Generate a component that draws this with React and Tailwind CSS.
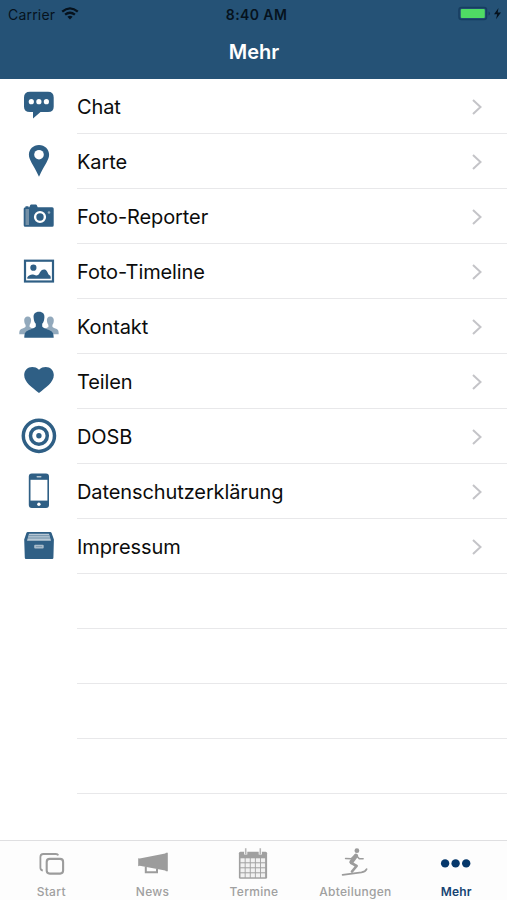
import React from 'react';

function ChatIcon() {
  return (
    <g>
      <path d="M15 12.700h18q5.700 0 5.700 5.700v9.300q0 5.300-5.700 5.300h-7.500L18 39.500V33h-3q-6 0-6-5.300v-9.300q0-5.700 6-5.700z" />
      <g fill="#fff">
        <circle cx="16.300" cy="22.700" r="2.600" />
        <circle cx="23.900" cy="22.700" r="2.600" />
        <circle cx="31.400" cy="22.700" r="2.600" />
      </g>
    </g>
  );
}

function PinIcon() {
  return (
    <g>
      <path d="M24 11c5.800 0 10.100 4.300 10.100 9.800 0 5.200-4.100 9.200-10.100 21.900-6-12.700-10.100-16.700-10.100-21.900C13.900 15.300 18.200 11 24 11z" />
      <circle cx="24" cy="20.700" r="4.800" fill="#fff" />
    </g>
  );
}

function CameraIcon() {
  return (
    <g>
      <path d="M10.500 18.300v-1h3v1h.8l1-2.300q.2-.4.700-.4h5q.5 0 .7.400l1 2.300h14.500q1.500 0 1.500 1.500v16.400q0 1.500-1.500 1.500h-27q-1.500 0-1.500-1.500V19.800q0-1.500 1.800-1.500z" />
      <rect x="10.500" y="20" width="3.500" height="16" fill="#7390a7" />
      <circle cx="25" cy="28" r="4.900" fill="none" stroke="#fff" strokeWidth="2.400" />
      <circle cx="34" cy="23.500" r="1.300" fill="#93abbd" />
    </g>
  );
}

function PictureIcon() {
  return (
    <g>
      <rect x="10" y="16.700" width="28" height="20.800" fill="#fff" stroke="#2f5f85" strokeWidth="2.200" />
      <circle cx="18.400" cy="23.700" r="3.100" />
      <path d="M12.300 34.700v-1.500c2-2.500 4.500-3.200 6.700-2.400 1.800.7 2.700 1.200 4.300 0 1.200-.8 1.500-2.800 3-4.200 1.800-1.500 4-1.500 5.400.3 1.300 1.700 1.300 3.500 2.800 4.300.8.400 1.200 1.200 1.200 2v1.500z" />
    </g>
  );
}

function PeopleIcon() {
  return (
    <g>
      <g fill="#92a9bc">
        <path d="M12.800 17.600c2.300 0 3.500 1.700 3.300 4-.2 2.200-.8 3.500-1.500 4.300v2l5 2.500v4.800H4.300c0-3.800.7-4.500 2.600-5.400 2-.8 3.200-1.200 3.700-2v-1.900c-.8-.8-1.300-2.100-1.400-4.300-.2-2.300 1.200-4 3.600-4z" />
        <path d="M35.200 17.600c-2.300 0-3.500 1.700-3.300 4 .2 2.200.8 3.500 1.500 4.300v2l-5 2.500v4.800h15.300c0-3.800-.7-4.500-2.600-5.400-2-.8-3.200-1.200-3.700-2v-1.900c.8-.8 1.300-2.100 1.400-4.300.2-2.300-1.200-4-3.600-4z" />
      </g>
      <path d="M24 12.800c3.900 0 5.700 2.300 5.400 5.600-.2 3-.9 5-2.200 6.300v2.900c.8 1.300 2.300 1.800 5.200 2.800 4.700 1.600 6.300 2.600 6.300 8.400H9.300c0-5.800 1.600-6.800 6.300-8.400 2.900-1 4.400-1.500 5.200-2.800v-2.900c-1.300-1.300-2-3.300-2.200-6.300-.3-3.300 1.500-5.600 5.400-5.600z" />
    </g>
  );
}

function HeartIcon() {
  return (
    <path d="M24 15.800C26 13.700 28.300 13 30.700 13c4.700 0 8.100 3.400 8.100 8.100 0 7.300-7.900 12.400-14.800 18-6.900-5.600-14.800-10.700-14.800-18 0-4.700 3.400-8.100 8.100-8.100 2.400 0 4.700.7 6.700 2.800z" />
  );
}

function TargetIcon() {
  return (
    <g>
      <circle cx="23.900" cy="26.800" r="15.600" fill="none" stroke="#2f5f85" strokeWidth="3.500" />
      <circle cx="23.900" cy="26.800" r="8.400" fill="none" stroke="#2f5f85" strokeWidth="3.500" />
      <circle cx="23.900" cy="26.800" r="2.700" />
    </g>
  );
}

function PhoneIcon() {
  return (
    <g>
      <rect x="13.800" y="9.400" width="20.200" height="34.600" rx="3" />
      <rect x="15.500" y="15.800" width="16.900" height="20.800" fill="#fff" />
      <rect x="21.500" y="12" width="5" height="1.400" rx=".7" fill="#b5c5d1" />
      <circle cx="23.900" cy="40.200" r="1.700" fill="#fff" />
    </g>
  );
}

function DrawerIcon() {
  return (
    <g>
      <path d="M12.800 13h22.400q1 0 1.400 1l2.300 6.500-.5 18.300q0 1.200-1.200 1.200H11q-1.200 0-1.200-1.200L9.200 20.500l2.200-6.500q.4-1 1.400-1z" />
      <path d="M14 14.700h20l2 7H12z" fill="#b8c8d5" />
      <path d="M13.500 16.700h21M13 19h22" stroke="#5b809c" strokeWidth=".8" />
      <rect x="19.200" y="25.700" width="9.500" height="3.800" rx="1" fill="#a9bccb" />
      <rect x="20.800" y="27.100" width="6.300" height="1" fill="#7c98ad" />
    </g>
  );
}

function StartIcon() {
  return (
    <g fill="none" stroke="#9c9c9c" strokeWidth="1.800">
      <path d="M31.300 14.300q-.6-1.300-2.400-1.300H16.400q-3 0-3 3v10.800q0 2.300 2.400 2.700" />
      <rect x="19.700" y="17.900" width="16.400" height="14.700" rx="3" strokeWidth="2.100" />
    </g>
  );
}

function NewsIcon() {
  return (
    <g fill="#9c9c9c">
      <path d="M10.200 17.300l1.500.3 25.500-5 .8-.8h1.800v18.400h-1.800l-.8-.7-25.500-4.800-1.500.6z" />
      <path d="M17.800 25.500v5.800H29v-3.500" fill="none" stroke="#9c9c9c" strokeWidth="2" />
    </g>
  );
}

function CalendarIcon() {
  return (
    <g>
      <rect x="9.900" y="10.700" width="28.200" height="27" rx="1.500" fill="#a0a0a0" />
      <g fill="#f1f1f1">
        {[17.300, 22.300, 27.300, 32.300].map((y) =>
          [11.500, 16.600, 21.700, 26.800, 31.900].map((x) => (
            <rect key={x + '-' + y} x={x} y={y} width="4.200" height="4" />
          ))
        )}
      </g>
      <path d="M16.700 7.500v6M31.300 7.500v6" stroke="#fff" strokeWidth="3.200" />
      <path d="M16.700 7.300v6M31.300 7.300v6" stroke="#b5b5b5" strokeWidth="1.600" />
    </g>
  );
}

function SkiIcon() {
  return (
    <g fill="none" stroke="#9c9c9c" strokeLinecap="round" strokeLinejoin="round">
      <circle cx="25.900" cy="9.700" r="2.400" fill="#9c9c9c" stroke="none" />
      <path d="M25 14.800l-4.600 6.200" strokeWidth="4.200" />
      <path d="M20.200 21.800l5.400 3.200-4.600 5.500" strokeWidth="2.700" />
      <path d="M24 14.300l-3.600 3.400-5.800-.2M26 15.200l2.300 2.600h3.800" strokeWidth="1.600" />
      <path d="M11.600 33.800l18.800-2.500q4.200-.7 5.200-3.200" strokeWidth="1.700" />
    </g>
  );
}

function MoreIcon() {
  return (
    <g fill="#06386b">
      <circle cx="13.100" cy="22.400" r="4.200" />
      <circle cx="23.600" cy="22.400" r="4.200" />
      <circle cx="34.200" cy="22.400" r="4.200" />
    </g>
  );
}

const items = [
  { label: 'Chat', icon: ChatIcon },
  { label: 'Karte', icon: PinIcon },
  { label: 'Foto-Reporter', icon: CameraIcon },
  { label: 'Foto-Timeline', icon: PictureIcon },
  { label: 'Kontakt', icon: PeopleIcon },
  { label: 'Teilen', icon: HeartIcon },
  { label: 'DOSB', icon: TargetIcon },
  { label: 'Datenschutzerklärung', icon: PhoneIcon },
  { label: 'Impressum', icon: DrawerIcon },
];

const tabs = [
  { label: 'Start', icon: StartIcon },
  { label: 'News', icon: NewsIcon },
  { label: 'Termine', icon: CalendarIcon },
  { label: 'Abteilungen', icon: SkiIcon },
  { label: 'Mehr', icon: MoreIcon, active: true },
];

function StatusBar() {
  return (
    <div className="grid h-[27px] grid-cols-[1fr_auto_1fr] items-center pl-2 pr-[5px] text-[#06121d]">
      <div className="flex items-center gap-[6px]">
        <span className="pt-px text-[14px] tracking-[0.2px]">Carrier</span>
        <svg width="18" height="13" viewBox="0 0 18 13" fill="none" stroke="#06121d" strokeWidth="2.300">
          <path d="M1.200 4.600q7.800-6.500 15.600 0M4.100 7.700q4.900-4 9.800 0" />
          <path d="M9 12.400L6.400 9.800q2.600-2 5.200 0z" fill="#06121d" stroke="none" />
        </svg>
      </div>
      <span className="pl-[3px] pt-px text-[14px] font-semibold tracking-[0.4px]">8:40 AM</span>
      <div className="flex items-center justify-end">
        <svg width="44" height="16" viewBox="0 0 44 16">
          <rect x="1" y="1.500" width="27.500" height="12" rx="2.500" fill="#255276" stroke="#173d60" strokeWidth="1.500" />
          <rect x="2.800" y="3.100" width="24" height="8.800" rx="1" fill="#4fdb64" />
          <path d="M30.500 5.500v4q1.600-.6 1.600-2t-1.600-2z" fill="#173d60" />
          <path d="M40.500 2L36 8.300h3.200L38 13.200l5-6.600h-3.300z" fill="#06121d" />
        </svg>
      </div>
    </div>
  );
}

function MenuRow({ label, icon: Icon }) {
  return (
    <li className="flex h-[55px] pl-[15px]">
      {Icon ? (
        <svg width="48" height="55" viewBox="0 0 48 55" fill="#2f5f85" className="shrink-0">
          <Icon />
        </svg>
      ) : (
        <span className="w-12 shrink-0" />
      )}
      <div className="ml-[14px] flex flex-1 items-center justify-between border-b border-[#e8e8ea] pr-[24px] pt-px">
        <span className="pt-px text-[20px] leading-6 tracking-[-0.1px] text-[#0c0c0c]">{label}</span>
        {Icon && (
          <svg width="12" height="18" viewBox="0 0 12 18" fill="none" stroke="#c4c4c8" strokeWidth="2">
            <path d="M2 2l7.500 7L2 16" />
          </svg>
        )}
      </div>
    </li>
  );
}

export default function App() {
  return (
    <div className="flex h-[900px] w-[507px] flex-col overflow-hidden bg-white font-['Inter',sans-serif]">
      <header className="h-[79px] bg-[#255276]">
        <StatusBar />
        <h1 className="pl-px pt-[11px] text-center text-[20px] font-semibold leading-7 text-white">Mehr</h1>
      </header>
      <ul className="flex-1">
        {items.map((item) => (
          <MenuRow key={item.label} {...item} />
        ))}
        {[1, 2, 3, 4].map((n) => (
          <MenuRow key={n} />
        ))}
      </ul>
      <nav className="grid h-[60px] grid-cols-5 border-t border-[#dfdfe1] bg-[#fdfdfd]">
        {tabs.map(({ label, icon: Icon, active }) => (
          <div key={label} className="flex flex-col items-center">
            <svg width="48" height="40" viewBox="0 0 48 40">
              <Icon />
            </svg>
            <span
              className={
                active
                  ? 'mt-[3px] text-[12px] font-semibold leading-4 tracking-[0.2px] text-[#164473]'
                  : 'mt-[3px] pl-px text-[12px] font-medium leading-4 tracking-[0.3px] text-[#a0a0a0]'
              }
            >
              {label}
            </span>
          </div>
        ))}
      </nav>
    </div>
  );
}
